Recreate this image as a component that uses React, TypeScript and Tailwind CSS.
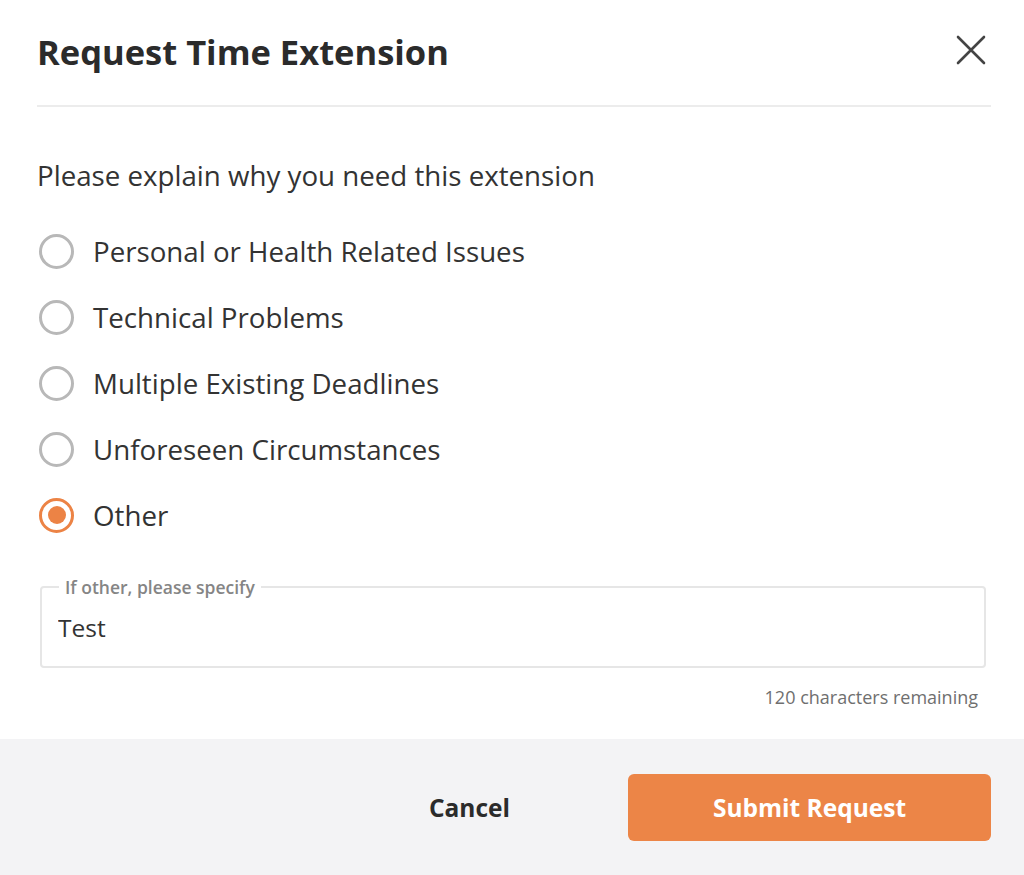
import React, { useState } from 'react';

const reasons = [
  'Personal or Health Related Issues',
  'Technical Problems',
  'Multiple Existing Deadlines',
  'Unforeseen Circumstances',
  'Other',
];

export default function App() {
  const [selected, setSelected] = useState(4);
  const [other, setOther] = useState('Test');

  return (
    <div className="w-[1024px] h-[875px] bg-white flex flex-col text-[#333] font-['Open_Sans',sans-serif]">
      {/* Header */}
      <div className="mx-[37px] mr-[33px] h-[107px] flex items-start justify-between border-b-2 border-[#ececec]">
        <h1 className="mt-[30px] text-[34.5px] leading-[44px] font-bold text-[#2b2b2b]">Request Time Extension</h1>
        <button className="mt-[34px] mr-[4px] w-[32px] h-[32px] flex items-center justify-center text-[#444]">
          <svg width="30" height="30" viewBox="0 0 30 30" fill="none" stroke="currentColor" strokeWidth="2.6" strokeLinecap="round">
            <path d="M2 2L28 28M28 2L2 28" />
          </svg>
        </button>
      </div>

      {/* Body */}
      <div className="px-[37px] pr-[33px] flex-1">
        <p className="mt-[50px] text-[27.7px] leading-[36px]">Please explain why you need this extension</p>
        <div className="mt-[25px] flex flex-col">
          {reasons.map((r, idx) => (
            <label key={r} onClick={() => setSelected(idx)} className="h-[66px] flex items-center cursor-pointer">
              {selected === idx ? (
                <span className="ml-[2px] w-[35px] h-[35px] rounded-full border-[3px] border-[#ec8345] flex items-center justify-center">
                  <span className="w-[18px] h-[18px] rounded-full bg-[#ec8345]" />
                </span>
              ) : (
                <span className="ml-[2px] w-[35px] h-[35px] rounded-full border-[3px] border-[#b8b8b8]" />
              )}
              <span className="ml-[19px] text-[27.7px] leading-[36px] text-[#333]">{r}</span>
            </label>
          ))}
        </div>

        <fieldset className="mt-[30px] ml-[3px] mr-[5px] h-[90px] border-2 border-[#e6e6e6] rounded-[4px] px-[16px] pt-0">
          <legend className="px-[6px] text-[17.5px] leading-[18px] font-semibold text-[#858585] ml-[1px]">If other, please specify</legend>
          <input
            value={other}
            onChange={(e) => setOther(e.target.value)}
            className="w-full mt-[16px] text-[24.5px] leading-[32px] text-[#333] outline-none bg-transparent"
          />
        </fieldset>
        <p className="mt-[17px] mr-[13px] text-right text-[18px] leading-[24px] text-[#6f6f6f]">
          {120 - (other.length - 4)} characters remaining
        </p>
      </div>

      {/* Footer */}
      <div className="h-[136px] bg-[#f3f3f5] flex items-center justify-end pr-[33px]">
        <button className="text-[24.5px] font-bold text-[#2b2b2b] mr-[118px] pt-[2px]">Cancel</button>
        <button className="w-[363px] h-[67px] rounded-[6px] bg-[#ec8547] text-white text-[24.5px] font-bold pt-[3px]">
          Submit Request
        </button>
      </div>
    </div>
  );
}
